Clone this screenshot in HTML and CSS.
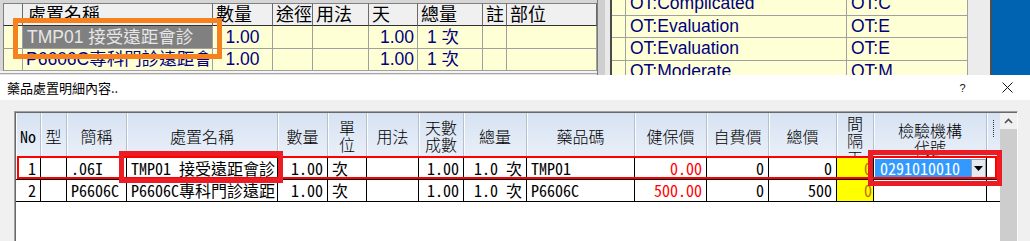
FILE: index.html
```html
<!DOCTYPE html>
<html lang="zh-Hant">
<head>
    <meta charset="UTF-8">
    <meta name="viewport" content="width=device-width, initial-scale=1.0">
    <title>藥品處置明細內容</title>
    <link rel="stylesheet" href="styles.css">
</head>
<body>

<div class="screen">

    <!-- main window behind the dialog -->
    <div class="behind">
        <div class="orders">
            <div class="og-row og-head">
                <div></div>
                <div>處置名稱</div>
                <div>數量</div>
                <div>途徑</div>
                <div>用法</div>
                <div>天</div>
                <div>總量</div>
                <div>註</div>
                <div>部位</div>
            </div>
            <div class="og-row">
                <div></div>
                <div class="picked">TMP01 接受遠距會診</div>
                <div class="mid">1.00</div>
                <div></div>
                <div></div>
                <div class="num">1.00</div>
                <div class="qty">1 次</div>
                <div></div>
                <div></div>
            </div>
            <div class="og-row short">
                <div></div>
                <div>P6606C專科門診遠距會診</div>
                <div class="mid">1.00</div>
                <div></div>
                <div></div>
                <div class="num">1.00</div>
                <div class="qty">1 次</div>
                <div></div>
                <div></div>
            </div>
            <div class="orders-foot"></div>
        </div>

        <div class="split"></div>

        <div class="codes">
            <div class="cg">
                <div class="cg-row"><div></div><div>OT:Complicated</div><div>OT:C</div></div>
                <div class="cg-row"><div></div><div>OT:Evaluation</div><div>OT:E</div></div>
                <div class="cg-row"><div></div><div>OT:Evaluation</div><div>OT:E</div></div>
                <div class="cg-row"><div></div><div>OT:Moderate</div><div>OT:M</div></div>
            </div>
            <div class="codes-gutter"></div>
        </div>
        <div class="edge"></div>
        <div class="desk"></div>
    </div>

    <!-- dialog -->
    <div class="dialog">
        <div class="dlg-title">
            <div class="dlg-caption">藥品處置明細內容..</div>
            <div class="dlg-btn help">?</div>
            <div class="dlg-btn">
                <svg width="11" height="11" viewBox="0 0 11 11"><path d="M0.5 0.5 L10.5 10.5 M10.5 0.5 L0.5 10.5" stroke="#111" stroke-width="1" fill="none"/></svg>
            </div>
        </div>

        <div class="dlg-body">
            <div class="grid">
                <div class="grid-in">
                    <div class="cells">
                        <div class="dg-row dg-head">
                            <div>No</div>
                            <div>型</div>
                            <div>簡稱</div>
                            <div>處置名稱</div>
                            <div>數量</div>
                            <div>單<br>位</div>
                            <div>用法</div>
                            <div>天數<br>成數</div>
                            <div>總量</div>
                            <div>藥品碼</div>
                            <div>健保價</div>
                            <div>自費價</div>
                            <div>總價</div>
                            <div class="top">間<br>隔<br>天</div>
                            <div class="low">檢驗機構<br>代號</div>
                            <div class="top"><span class="dots"></span></div>
                        </div>

                        <div class="dg-row current">
                            <div class="r">1</div>
                            <div></div>
                            <div>.06I</div>
                            <div>TMP01 接受遠距會診</div>
                            <div class="r">1.00</div>
                            <div>次</div>
                            <div></div>
                            <div class="r">1.00</div>
                            <div class="r">1.0 次</div>
                            <div>TMP01</div>
                            <div class="r red">0.00</div>
                            <div class="r">0</div>
                            <div class="r">0</div>
                            <div class="r gap">0</div>
                            <div class="combo-cell">
                                <div class="combo">
                                    <span class="combo-text">0291010010</span>
                                    <span class="combo-btn">
                                        <svg width="9" height="5" viewBox="0 0 9 5"><path d="M0 0 H9 L4.5 5 Z" fill="#000"/></svg>
                                    </span>
                                </div>
                            </div>
                            <div></div>
                        </div>

                        <div class="dg-row">
                            <div class="r">2</div>
                            <div></div>
                            <div>P6606C</div>
                            <div>P6606C專科門診遠距</div>
                            <div class="r">1.00</div>
                            <div>次</div>
                            <div></div>
                            <div class="r">1.00</div>
                            <div class="r">1.0 次</div>
                            <div>P6606C</div>
                            <div class="r red">500.00</div>
                            <div class="r">0</div>
                            <div class="r">500</div>
                            <div class="r gap">0</div>
                            <div></div>
                            <div></div>
                        </div>
                    </div>

                    <div class="vscroll">
                        <div class="vs-up">
                            <svg width="9" height="6" viewBox="0 0 9 6"><path d="M1 5 L4.5 1.5 L8 5" stroke="#505050" stroke-width="1.6" fill="none"/></svg>
                        </div>
                    </div>
                </div>
            </div>
        </div>
    </div>

    <!-- annotation marks drawn over the screenshot -->
    <div class="mark mark-orange"></div>
    <div class="mark mark-name"></div>
    <div class="mark mark-lab"></div>
</div>

</body>
</html>
```

FILE: styles.css
```css
* {
    box-sizing: border-box;
}
body {
    margin: 0;
    width: 1030px;
    height: 241px;
    overflow: hidden;
    background: #f0f0f0;
    font-family: "Liberation Sans", "Noto Sans CJK TC", sans-serif;
}
.screen {
    position: relative;
    height: 241px;
}

/* window behind */
.behind {
    display: flex;
    height: 75px;
    overflow: hidden;
}
.orders {
    width: 597px;
    padding: 3px 0 0 3px;
    background: #d6d6d6;
    display: flex;
    flex-direction: column;
}
.og-row {
    display: grid;
    grid-template-columns: 20px 190px 60px 40px 56px 49px 65px 24px 90px;
}
.og-row > div {
    border-right: 1px solid #a0a0a0;
    border-bottom: 1px solid #a0a0a0;
    background: #ffffd6;
    color: #000080;
    font-size: 17.5px;
    line-height: 22px;
    padding: 0 3px;
    white-space: nowrap;
    overflow: hidden;
}
.og-row.short > div {
    line-height: 21px;
}
.og-head > div {
    background: #f0f0f0;
    color: #000;
    border-top: 1px solid #808080;
    border-right-color: #6a6a6a;
    border-bottom-color: #303030;
    line-height: 20px;
    padding-top: 1px;
    font-size: 18px;
}
.og-head > div:nth-child(2) {
    padding-left: 5px;
}
.og-row > div:first-child {
    border-left: 1px solid #808080;
}
.og-row .picked {
    background: #808080;
    color: #e6e6e6;
    padding-left: 4px;
}
.og-row .mid {
    text-align: center;
}
.og-row .num {
    text-align: right;
}
.og-row .qty {
    padding-left: 9px;
}
.orders-foot {
    flex: 1;
    margin-left: -3px;
    background: #e2e2e2;
    border-top: 2px solid #f4f4f4;
    box-shadow: inset 0 1px #a8a8a8;
}
.split {
    width: 15px;
    background: linear-gradient(to right, #7a7a7a 0 1px, #cfcfcf 1px 8px, #e9e9e9 8px 13px, #4a4a4a 13px 15px);
}
.codes {
    width: 378px;
    display: flex;
    background: #ececec;
}
.cg {
    width: 356px;
    margin-top: -7px;
}
.cg-row {
    display: grid;
    grid-template-columns: 14px 221px 121px;
    height: 22.5px;
}
.cg-row > div {
    border-right: 1px solid #a0a0a0;
    border-bottom: 1px solid #a0a0a0;
    background: #ffffd6;
    color: #000080;
    font-size: 17.5px;
    line-height: 21px;
    padding-left: 4px;
    white-space: nowrap;
    overflow: hidden;
}
.cg-row > div:first-child {
    padding: 0;
}
.codes-gutter {
    flex: 1;
}
.edge {
    width: 2px;
    background: #4f4f4f;
}
.desk {
    flex: 1;
    background: #0063b1;
}

/* dialog */
.dialog {
    height: 166px;
    background: #f0f0f0;
}
.dlg-title {
    height: 25px;
    background: #fff;
    display: flex;
    align-items: center;
}
.dlg-caption {
    flex: 1;
    padding-left: 7px;
    font-family: "Noto Sans CJK TC", sans-serif;
    font-size: 13px;
    color: #000;
}
.dlg-btn {
    width: 45px;
    height: 25px;
    display: flex;
    align-items: center;
    justify-content: center;
}
.dlg-btn.help {
    font-size: 11px;
    color: #111;
}
.dlg-body {
    padding: 11px 12px 0 14px;
}
.grid {
    height: 140px;
    border-top: 1px solid #a0a0a0;
    border-left: 1px solid #a0a0a0;
    border-right: 1px solid #fafafa;
    background: #fff;
}
.grid-in {
    height: 100%;
    display: flex;
    border-top: 1px solid #696969;
    border-left: 1px solid #696969;
}
.cells {
    width: 984px;
}
.dg-row {
    display: grid;
    grid-template-columns: 25px 26px 60px 151px 50px 39px 52px 45px 63px 108px 72px 62px 68px 37px 113px 13px;
}
.dg-row > div {
    border-right: 1px solid #000;
    border-bottom: 1px solid #000;
    padding: 0 4px;
    font-family: "Noto Sans Mono CJK TC", "Liberation Mono", "Noto Sans CJK TC", monospace;
    font-size: 16px;
    font-weight: 300;
    line-height: 21px;
    color: #000;
    white-space: nowrap;
    overflow: hidden;
}
.dg-row > div:last-child {
    border-right: none;
}
.dg-row .r {
    text-align: right;
}
.dg-row .red {
    color: #ff0000;
}
.dg-row .gap {
    background: #ffff00;
    color: #c07000;
    padding-right: 1px;
}
.dg-head > div {
    height: 43px;
    display: flex;
    align-items: center;
    justify-content: center;
    text-align: center;
    padding: 3px 0 0;
    line-height: 17px;
    background: linear-gradient(#d6e2f3, #e9eff8);
    border-right: 1px solid #b4bfcf;
    border-bottom: none;
    box-shadow: inset 1px 0 #fbfcfe;
    font-family: "Noto Sans CJK TC", sans-serif;
}
.dg-head > div:first-child {
    font-family: "Noto Sans Mono CJK TC", "Liberation Mono", monospace;
}
.dg-head > div.top {
    align-items: flex-start;
    padding-top: 2px;
}
.dg-head > div.low {
    padding-top: 8px;
}
.dots {
    display: block;
    width: 1px;
    height: 17px;
    margin-top: 5px;
    border-left: 1px dotted #333;
}
.dg-row.current {
    position: relative;
}
.dg-row.current > div {
    padding-top: 2px;
}
.dg-row.current::after {
    content: "";
    position: absolute;
    left: 1px;
    right: 3px;
    top: 0;
    bottom: 1px;
    border: 2px solid #ff0000;
    pointer-events: none;
}
.dg-row > div.combo-cell {
    padding: 3px 0 0 1px;
}
.combo {
    display: flex;
    height: 19px;
    background: #3399ff;
    color: #fff;
}
.combo-text {
    flex: 1;
    padding-left: 5px;
    line-height: 19px;
}
.combo-btn {
    width: 15px;
    background: #e6e9ee;
    border: 1px solid #8fa1b8;
    display: flex;
    align-items: center;
    justify-content: center;
}
.vscroll {
    width: 17px;
    background: #cdcdcd;
}
.vs-up {
    height: 16px;
    background: #f0f0f0;
    display: flex;
    align-items: center;
    justify-content: center;
}

/* annotation marks */
.mark {
    position: absolute;
    border: 5px solid #ed1c24;
}
.mark-orange {
    left: 13px;
    top: 18px;
    width: 209px;
    height: 41px;
    border-color: #f5821f;
}
.mark-name {
    left: 119px;
    top: 151px;
    width: 164px;
    height: 32px;
}
.mark-lab {
    left: 868px;
    top: 150px;
    width: 134px;
    height: 36px;
}
```
